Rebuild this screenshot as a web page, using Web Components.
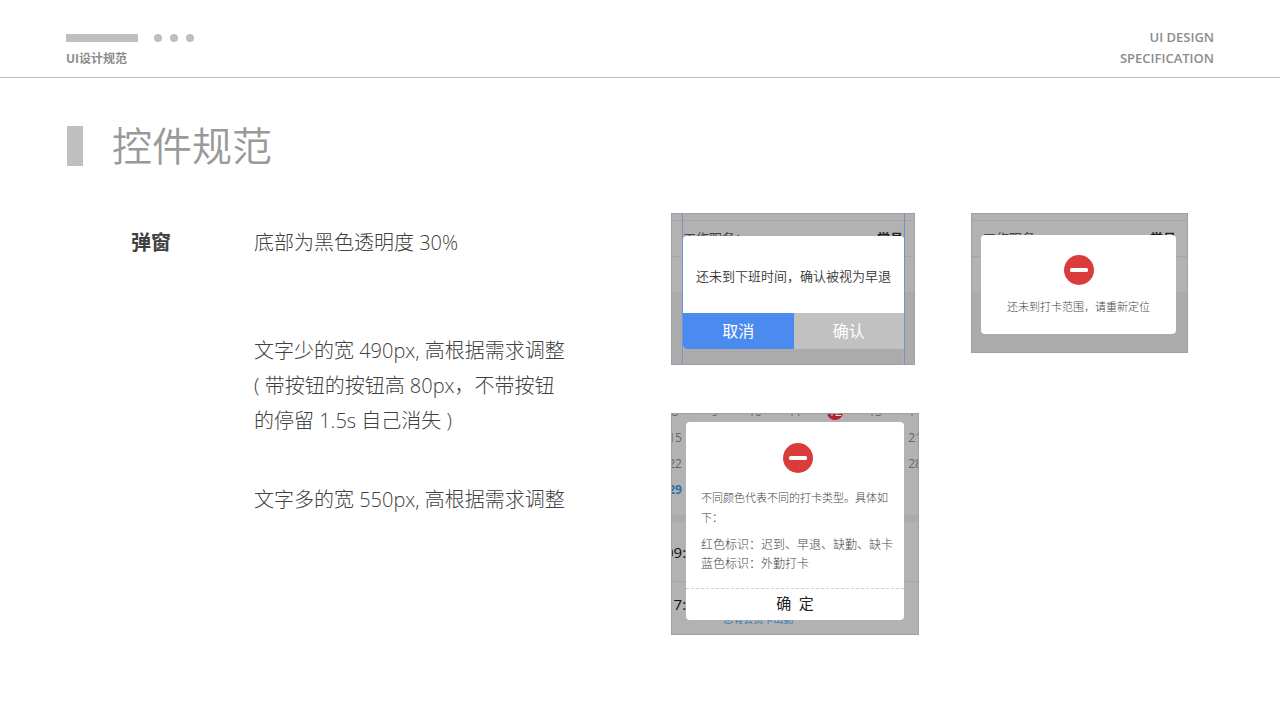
<!DOCTYPE html>
<html lang="zh-CN">
<head>
<meta charset="utf-8">
<title>UI设计规范</title>
<style>
    body {
        margin: 0;
        background: #fff;
        color: #404040;
        font-family: "Open Sans", "Noto Sans CJK SC", sans-serif;
    }
</style>
</head>
<body>
<spec-header>
    <span slot="name">UI设计规范</span>
    <span slot="first">UI DESIGN</span>
    <span slot="second">SPECIFICATION</span>
</spec-header>
<spec-title>控件规范</spec-title>
<spec-section>
    <span slot="label">弹窗</span>
    <spec-note slot="notes">底部为黑色透明度 30%</spec-note>
    <spec-note slot="notes">文字少的宽 490px, 高根据需求调整<br>( 带按钮的按钮高 80px，不带按钮<br>的停留 1.5s 自己消失 )</spec-note>
    <spec-note slot="notes">文字多的宽 550px, 高根据需求调整</spec-note>

    <phone-frame slot="demos" class="confirm" guides>
        <profile-rows slot="back"></profile-rows>
        <confirm-dialog>还未到下班时间，确认被视为早退</confirm-dialog>
    </phone-frame>
    <phone-frame slot="demos" class="toast">
        <profile-rows slot="back"></profile-rows>
        <toast-dialog>还未到打卡范围，请重新定位</toast-dialog>
    </phone-frame>
    <phone-frame slot="demos" class="notice">
        <punch-calendar slot="back"></punch-calendar>
        <notice-dialog>
            <span slot="intro">不同颜色代表不同的打卡类型。具体如下：</span>
            <span slot="list">红色标识：迟到、早退、缺勤、缺卡<br>蓝色标识：外勤打卡</span>
        </notice-dialog>
    </phone-frame>
</spec-section>

<script>
// attaches an open shadow root with the given markup
class BaseElement extends HTMLElement {
    constructor(){
        super();
        let shadow = this.attachShadow({mode: 'open'});
        shadow.innerHTML = this.render();
    }
}

class SpecHeader extends BaseElement {
    render(){
        return `
        <style>
            :host {
                display: flex;
                justify-content: space-between;
                padding: 27px 66px 8px;
                border-bottom: 1px solid #bfbfbf;
                color: #8c8c8c;
                font-size: 13px;
                font-weight: 600;
                line-height: 21px;
            }
            .marks {
                display: flex;
                align-items: center;
                gap: 8px;
                height: 21px;
            }
            .bar {
                width: 72px;
                height: 8px;
                margin-right: 8px;
                background: #bfbfbf;
            }
            .dot {
                width: 8px;
                height: 8px;
                border-radius: 50%;
                background: #bfbfbf;
            }
            .name {
                font-size: 12px;
                font-weight: 700;
            }
            .right {
                text-align: right;
            }
        </style>
        <div>
            <div class="marks">
                <i class="bar"></i><i class="dot"></i><i class="dot"></i><i class="dot"></i>
            </div>
            <div class="name"><slot name="name"></slot></div>
        </div>
        <div class="right">
            <div><slot name="first"></slot></div>
            <div><slot name="second"></slot></div>
        </div>
        `
    }
}
window.customElements.define("spec-header", SpecHeader);

class SpecTitle extends BaseElement {
    render(){
        return `
        <style>
            :host {
                display: flex;
                align-items: center;
                gap: 29px;
                padding: 48px 67px 0;
            }
            i {
                width: 16px;
                height: 40px;
                background: #bfbfbf;
            }
            h1 {
                margin: 0;
                color: #999;
                font-size: 40px;
                font-weight: 350;
                line-height: 40px;
            }
        </style>
        <i></i>
        <h1><slot></slot></h1>
        `
    }
}
window.customElements.define("spec-title", SpecTitle);

class SpecSection extends BaseElement {
    render(){
        return `
        <style>
            :host {
                display: grid;
                grid-template-columns: 123px minmax(320px, 417px) 1fr;
                padding: 47px 66px 48px 131px;
            }
            h2 {
                margin: 12px 0 0;
                font-size: 20px;
                font-weight: 700;
                line-height: 35px;
            }
            .notes {
                display: flex;
                flex-direction: column;
                gap: 44px;
                padding-top: 12px;
            }
            .demos {
                display: grid;
                grid-template-columns: 300px 217px;
                align-items: start;
                align-content: start;
                justify-items: start;
                row-gap: 48px;
            }
            ::slotted(phone-frame.confirm) {
                padding: 23px 11px 16px 12px;
                width: 221px;
            }
            ::slotted(phone-frame.toast) {
                padding: 22px 12px 19px 10px;
                width: 195px;
            }
            ::slotted(phone-frame.notice) {
                padding: 9px 15px 15px;
                width: 218px;
            }
        </style>
        <h2><slot name="label"></slot></h2>
        <div class="notes"><slot name="notes"></slot></div>
        <div class="demos"><slot name="demos"></slot></div>
        `
    }
}
window.customElements.define("spec-section", SpecSection);

class SpecNote extends BaseElement {
    render(){
        return `
        <style>
            :host {
                display: block;
                font-size: 20px;
                font-weight: 300;
                line-height: 35px;
                white-space: nowrap;
            }
            :host(:first-of-type) {
                margin-bottom: 29px;
            }
        </style>
        <slot></slot>
        `
    }
}
window.customElements.define("spec-note", SpecNote);

// piece of a phone screen: the dimmed page behind, the dialog on top
class PhoneFrame extends BaseElement {
    render(){
        return `
        <style>
            :host {
                display: block;
                position: relative;
                overflow: hidden;
                background: #ababab;
            }
            .back {
                position: absolute;
                inset: 0;
            }
            .edge {
                position: absolute;
                inset: 0;
                border: 1px solid #a0a0a0;
            }
            .front {
                position: relative;
            }
            .guides {
                display: none;
                position: absolute;
                inset: 0 10px 0 11px;
                border: solid #6b93de;
                border-width: 0 1px;
                box-shadow: inset 1px 0 #c0ae8c, inset -1px 0 #c0ae8c;
            }
            :host([guides]) .guides {
                display: block;
            }
        </style>
        <div class="back"><slot name="back"></slot></div>
        <div class="edge"></div>
        <div class="guides"></div>
        <div class="front"><slot></slot></div>
        `
    }
}
window.customElements.define("phone-frame", PhoneFrame);

class ProfileRows extends BaseElement {
    render(){
        return `
        <style>
            :host {
                display: block;
                padding-top: 7px;
                background: #b2b2b2;
                color: #444;
                font-size: 13px;
            }
            div {
                display: flex;
                justify-content: space-between;
                height: 35px;
                padding: 0 12px;
                border-top: 1px solid #a6a6a6;
                line-height: 35px;
            }
            b {
                color: #222;
            }
        </style>
        <div><span>工作职务：</span><b>学员</b></div>
        <div></div>
        `
    }
}
window.customElements.define("profile-rows", ProfileRows);

class ConfirmDialog extends BaseElement {
    render(){
        return `
        <style>
            :host {
                display: block;
                overflow: hidden;
                border-radius: 4px;
                background: #fff;
            }
            p {
                margin: 0;
                padding: 30px 0 27px;
                color: #333;
                font-size: 13px;
                font-weight: 350;
                line-height: 20px;
                text-align: center;
                white-space: nowrap;
            }
            .buttons {
                display: grid;
                grid-template-columns: 1fr 1fr;
            }
            button {
                height: 36px;
                padding: 0 0 2px;
                border: 0;
                background: #c1c1c1;
                color: #fff;
                font-family: inherit;
                font-size: 16px;
            }
            .cancel {
                background: #4b8bf0;
            }
        </style>
        <p><slot></slot></p>
        <div class="buttons">
            <button class="cancel">取消</button>
            <button>确认</button>
        </div>
        `
    }
}
window.customElements.define("confirm-dialog", ConfirmDialog);

class StopIcon extends BaseElement {
    render(){
        return `
        <style>
            :host {
                display: block;
                width: 30px;
                height: 30px;
                margin: 0 auto;
            }
            svg {
                display: block;
            }
        </style>
        <svg width="30" height="30" viewBox="0 0 30 30">
            <circle cx="15" cy="15" r="15" fill="#da3c3c"/>
            <rect x="6" y="13" width="18" height="4" rx="1.5" fill="#fff"/>
        </svg>
        `
    }
}
window.customElements.define("stop-icon", StopIcon);

class ToastDialog extends BaseElement {
    render(){
        return `
        <style>
            :host {
                display: block;
                padding: 20px 0 17px;
                border-radius: 4px;
                background: #fff;
            }
            p {
                margin: 12px 0 0;
                color: #444;
                font-size: 11px;
                font-weight: 300;
                line-height: 20px;
                text-align: center;
            }
        </style>
        <stop-icon></stop-icon>
        <p><slot></slot></p>
        `
    }
}
window.customElements.define("toast-dialog", ToastDialog);

class NoticeDialog extends BaseElement {
    render(){
        return `
        <style>
            :host {
                display: block;
                border-radius: 4px;
                background: #fff;
            }
            .content {
                padding: 21px 9px 15px 15px;
            }
            p {
                margin: 0;
                color: #444;
                font-size: 12px;
                font-weight: 300;
                line-height: 19px;
            }
            .intro {
                margin: 15px 0 7px;
                font-size: 11px;
                line-height: 20px;
            }
            button {
                display: block;
                width: 100%;
                height: 32px;
                padding: 0 0 4px;
                border: 0;
                border-top: 1px dashed #d0d0d0;
                background: none;
                color: #222;
                font-family: inherit;
                font-size: 15px;
            }
        </style>
        <div class="content">
            <stop-icon></stop-icon>
            <p class="intro"><slot name="intro"></slot></p>
            <p><slot name="list"></slot></p>
        </div>
        <button>确&ensp;定</button>
        `
    }
}
window.customElements.define("notice-dialog", NoticeDialog);

// month grid and the punch records, both cut off by the frame
class PunchCalendar extends BaseElement {
    render(){
        let days = '';
        for (let day = 8; day <= 29; day++) {
            let name = day === 12 ? 'today' : day === 29 ? 'out' : '';
            days += `<span class="${name}">${day}</span>`;
        }
        return `
        <style>
            :host {
                display: block;
                margin: -14px 0 0 -16px;
                background: #b2b2b2;
                color: #666;
                font-size: 12px;
            }
            .days {
                display: grid;
                grid-template-columns: repeat(7, 40px);
                grid-auto-rows: 26px;
                height: 116px;
                border-bottom: 7px solid #ababab;
                line-height: 26px;
                text-align: center;
            }
            .today {
                justify-self: center;
                align-self: center;
                width: 16px;
                height: 16px;
                border-radius: 50%;
                background: #b3202c;
                color: #ddd;
                line-height: 16px;
            }
            .out {
                color: #2f6fa8;
                font-weight: 700;
            }
            .record {
                display: flex;
                height: 59px;
                padding-left: 10px;
                border-bottom: 1px solid #a6a6a6;
                color: #111;
                font-size: 15px;
                line-height: 60px;
            }
            .last {
                height: 52px;
                border: 0;
                line-height: 45px;
            }
            a {
                margin: 27px 0 0 20px;
                color: #3a7cb5;
                font-size: 10px;
                line-height: 20px;
                text-decoration: none;
            }
        </style>
        <div class="days">${days}</div>
        <div class="record">09:00</div>
        <div class="record last">17:30<a href="#">您有会员卡出勤</a></div>
        `
    }
}
window.customElements.define("punch-calendar", PunchCalendar);
</script>
</body>
</html>
